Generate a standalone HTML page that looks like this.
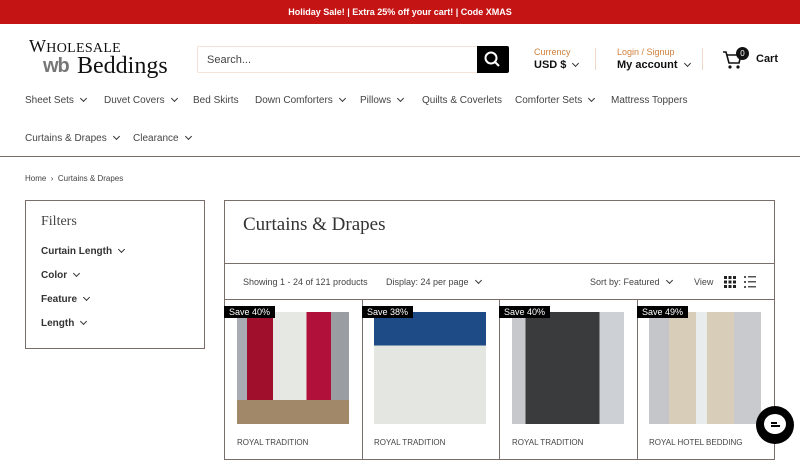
<!DOCTYPE html><html><head><style>
*{margin:0;padding:0;box-sizing:border-box}
body{width:800px;height:450px;overflow:hidden;font-family:"Liberation Sans",sans-serif;background:#fff;position:relative;color:#333}
.a{position:absolute}
.bar{left:0;top:0;width:800px;height:24px;background:#c41414;color:#fff;font-size:9px;font-weight:bold;text-align:center;line-height:24px}
.nav{font-size:10px;color:#444;white-space:nowrap}
.chev{display:inline-block;width:5px;height:5px;border-right:1.5px solid #333;border-bottom:1.5px solid #333;transform:rotate(45deg);margin:0 0 2px 7px}
.box{border:1px solid #7a6e6a}
.badge{background:#000;color:#fff;font-size:9px;padding:0 5px;height:12px;line-height:12px}
.img{width:112px;height:112px}
.brand{font-size:8px;color:#444}
</style></head><body>
<div class="a bar">Holiday Sale! | Extra 25% off your cart! | Code XMAS</div>
<div class="a" style="left:29px;top:36px;font-family:'Liberation Serif',serif;font-size:18px;color:#111;letter-spacing:.3px">W<span style="font-size:14px">HOLESALE</span></div>
<div class="a" style="left:43px;top:55px;font-family:'Liberation Sans',sans-serif;font-size:20px;color:#777;font-weight:bold;letter-spacing:-1px">wb</div>
<div class="a" style="left:77px;top:53px;font-family:'Liberation Serif',serif;font-size:24px;color:#111">Beddings</div>
<div class="a" style="left:197px;top:46px;width:281px;height:27px;border:1px solid #f3e3d8;border-radius:2px 0 0 2px;font-size:11px;color:#444;padding:7px 9px">Search...</div>
<div class="a" style="left:477px;top:46px;width:32px;height:27px;background:#000;border-radius:0 2px 2px 0"><svg width="32" height="27"><circle cx="14" cy="12" r="5.5" fill="none" stroke="#fff" stroke-width="2"/><line x1="18" y1="16" x2="22" y2="20" stroke="#fff" stroke-width="2"/></svg></div>
<div class="a" style="left:534px;top:47px;font-size:9px;color:#d0803d">Currency</div>
<div class="a" style="left:534px;top:59px;font-size:11px;font-weight:bold;color:#111">USD $<span class="chev"></span></div>
<div class="a" style="left:595px;top:48px;width:1px;height:22px;background:#f0d8c8"></div>
<div class="a" style="left:617px;top:47px;font-size:9px;color:#d0803d">Login / Signup</div>
<div class="a" style="left:617px;top:59px;font-size:11px;font-weight:bold;color:#111">My account<span class="chev"></span></div>
<div class="a" style="left:702px;top:48px;width:1px;height:22px;background:#f0d8c8"></div>
<svg class="a" style="left:722px;top:50px" width="22" height="20"><path d="M1 2h3l3 11h10l2-8H5" fill="none" stroke="#111" stroke-width="1.6"/><circle cx="8" cy="17" r="1.6" fill="#111"/><circle cx="16" cy="17" r="1.6" fill="#111"/></svg>
<div class="a" style="left:736px;top:47px;width:13px;height:13px;border-radius:50%;background:#111;color:#fff;font-size:8px;text-align:center;line-height:13px">0</div>
<div class="a" style="left:756px;top:53px;font-size:11px;font-weight:bold;color:#111">Cart</div>
<div class="a nav" style="left:25px;top:95px">Sheet Sets<span class="chev"></span></div>
<div class="a nav" style="left:104px;top:95px">Duvet Covers<span class="chev"></span></div>
<div class="a nav" style="left:193px;top:95px">Bed Skirts</div>
<div class="a nav" style="left:255px;top:95px">Down Comforters<span class="chev"></span></div>
<div class="a nav" style="left:360px;top:95px">Pillows<span class="chev"></span></div>
<div class="a nav" style="left:422px;top:95px">Quilts &amp; Coverlets</div>
<div class="a nav" style="left:515px;top:95px">Comforter Sets<span class="chev"></span></div>
<div class="a nav" style="left:611px;top:95px">Mattress Toppers</div>
<div class="a nav" style="left:25px;top:133px">Curtains &amp; Drapes<span class="chev"></span></div>
<div class="a nav" style="left:133px;top:133px">Clearance<span class="chev"></span></div>
<div class="a" style="left:0;top:156px;width:800px;height:1px;background:#7a6e6a"></div>
<div class="a" style="left:25px;top:174px;font-size:8px;color:#444">Home &nbsp;›&nbsp; Curtains &amp; Drapes</div>
<div class="a box" style="left:25px;top:200px;width:180px;height:149px"></div>
<div class="a" style="left:41px;top:214px;font-family:'Liberation Serif',serif;font-size:14px;color:#444">Filters</div>
<div class="a nav" style="left:41px;top:246px;font-weight:bold;color:#333">Curtain Length<span class="chev"></span></div>
<div class="a nav" style="left:41px;top:270px;font-weight:bold;color:#333">Color<span class="chev"></span></div>
<div class="a nav" style="left:41px;top:294px;font-weight:bold;color:#333">Feature<span class="chev"></span></div>
<div class="a nav" style="left:41px;top:318px;font-weight:bold;color:#333">Length<span class="chev"></span></div>
<div class="a box" style="left:224px;top:200px;width:551px;height:260px"></div>
<div class="a" style="left:243px;top:214px;font-family:'Liberation Serif',serif;font-size:19px;color:#333">Curtains &amp; Drapes</div>
<div class="a" style="left:224px;top:263px;width:551px;height:1px;background:#7a6e6a"></div>
<div class="a" style="left:243px;top:277px;font-size:9px;color:#444">Showing 1 - 24 of 121 products</div>
<div class="a" style="left:386px;top:277px;font-size:9px;color:#444">Display: 24 per page<span class="chev"></span></div>
<div class="a" style="left:590px;top:277px;font-size:9px;color:#444">Sort by: Featured<span class="chev"></span></div>
<div class="a" style="left:694px;top:277px;font-size:9px;color:#444">View</div>
<svg class="a" style="left:724px;top:276px" width="12" height="12"><g fill="#222"><rect x="0" y="0" width="3" height="3"/><rect x="4.5" y="0" width="3" height="3"/><rect x="9" y="0" width="3" height="3"/><rect x="0" y="4.5" width="3" height="3"/><rect x="4.5" y="4.5" width="3" height="3"/><rect x="9" y="4.5" width="3" height="3"/><rect x="0" y="9" width="3" height="3"/><rect x="4.5" y="9" width="3" height="3"/><rect x="9" y="9" width="3" height="3"/></g></svg>
<svg class="a" style="left:744px;top:276px" width="12" height="12"><g fill="#555"><rect x="0" y="0" width="2" height="2"/><rect x="4" y="0" width="8" height="1.5"/><rect x="0" y="5" width="2" height="2"/><rect x="4" y="5" width="8" height="1.5"/><rect x="0" y="10" width="2" height="2"/><rect x="4" y="10" width="8" height="1.5"/></g></svg>
<div class="a" style="left:224px;top:299px;width:551px;height:1px;background:#7a6e6a"></div>
<div class="a" style="left:362px;top:299px;width:1px;height:160px;background:#7a6e6a"></div>
<div class="a" style="left:499px;top:299px;width:1px;height:160px;background:#7a6e6a"></div>
<div class="a" style="left:637px;top:299px;width:1px;height:160px;background:#7a6e6a"></div>
<div class="a img" style="left:237px;top:312px;background:linear-gradient(90deg,#a9adb3 0 9%,#a0102c 9% 32%,#e6e8e4 32% 62%,#b0103a 62% 84%,#9a9da2 84%);"></div>
<div class="a" style="left:237px;top:400px;width:112px;height:24px;background:#a08868"></div>
<div class="a img" style="left:374px;top:312px;background:linear-gradient(180deg,#1e4a86 0 30%,#e4e6e2 30%)"></div>
<div class="a img" style="left:512px;top:312px;background:linear-gradient(90deg,#c6c8cc 0 12%,#3a3b3d 12% 78%,#cdd0d4 78%)"></div>
<div class="a img" style="left:649px;top:312px;background:linear-gradient(90deg,#c4c6ca 0 18%,#d8cdb8 18% 42%,#e8ecec 42% 52%,#d8cdb8 52% 76%,#c8cace 76%)"></div>
<div class="a badge" style="left:224px;top:306px">Save 40%</div>
<div class="a badge" style="left:362px;top:306px">Save 38%</div>
<div class="a badge" style="left:499px;top:306px">Save 40%</div>
<div class="a badge" style="left:637px;top:306px">Save 49%</div>
<div class="a brand" style="left:237px;top:438px">ROYAL TRADITION</div>
<div class="a brand" style="left:374px;top:438px">ROYAL TRADITION</div>
<div class="a brand" style="left:512px;top:438px">ROYAL TRADITION</div>
<div class="a brand" style="left:649px;top:438px">ROYAL HOTEL BEDDING</div>
<div class="a" style="left:756px;top:406px;width:38px;height:38px;border-radius:50%;background:#000"><div style="position:absolute;left:8px;top:8px;width:22px;height:20px;border-radius:50%;background:#fff"></div><div style="position:absolute;left:15px;top:16px;width:6px;height:1.5px;background:#000"></div><div style="position:absolute;left:15px;top:19px;width:9px;height:1.5px;background:#000"></div></div>
</body></html>
